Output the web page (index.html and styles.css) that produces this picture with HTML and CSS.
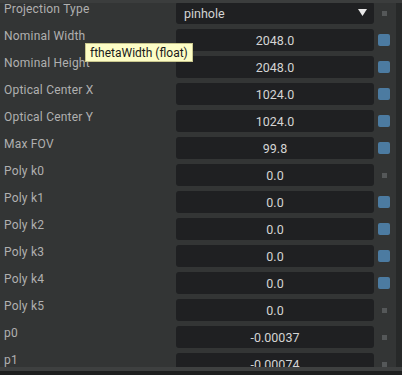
FILE: index.html
```html
<!DOCTYPE html>
<html lang="en">
<head>
    <meta charset="UTF-8">
    <title>Camera Properties</title>
    <link rel="stylesheet" href="styles.css">
</head>
<body>
    <div class="top-edge"></div>
    <div class="main">
        <div class="viewport">
            <div class="rows">
                <div class="row">
                    <div class="label">Projection Type</div>
                    <div class="field combo">
                        <span>pinhole</span>
                        <svg class="arrow" width="9" height="7" viewBox="0 0 9 7"><path d="M0 0 H9 L4.5 7 Z" fill="#e8e8e8"/></svg>
                    </div>
                    <div class="ctrl"><span class="dot"></span></div>
                </div>
                <div class="row">
                    <div class="label">Nominal Width</div>
                    <div class="field">2048.0</div>
                    <div class="ctrl"><span class="check"></span></div>
                </div>
                <div class="row">
                    <div class="label">Nominal Height</div>
                    <div class="field">2048.0</div>
                    <div class="ctrl"><span class="check"></span></div>
                </div>
                <div class="row">
                    <div class="label">Optical Center X</div>
                    <div class="field">1024.0</div>
                    <div class="ctrl"><span class="check"></span></div>
                </div>
                <div class="row">
                    <div class="label">Optical Center Y</div>
                    <div class="field">1024.0</div>
                    <div class="ctrl"><span class="check"></span></div>
                </div>
                <div class="row">
                    <div class="label">Max FOV</div>
                    <div class="field">99.8</div>
                    <div class="ctrl"><span class="check"></span></div>
                </div>
                <div class="row">
                    <div class="label">Poly k0</div>
                    <div class="field">0.0</div>
                    <div class="ctrl"><span class="dot"></span></div>
                </div>
                <div class="row">
                    <div class="label">Poly k1</div>
                    <div class="field">0.0</div>
                    <div class="ctrl"><span class="check"></span></div>
                </div>
                <div class="row">
                    <div class="label">Poly k2</div>
                    <div class="field">0.0</div>
                    <div class="ctrl"><span class="check"></span></div>
                </div>
                <div class="row">
                    <div class="label">Poly k3</div>
                    <div class="field">0.0</div>
                    <div class="ctrl"><span class="check"></span></div>
                </div>
                <div class="row">
                    <div class="label">Poly k4</div>
                    <div class="field">0.0</div>
                    <div class="ctrl"><span class="check"></span></div>
                </div>
                <div class="row">
                    <div class="label">Poly k5</div>
                    <div class="field">0.0</div>
                    <div class="ctrl"><span class="dot"></span></div>
                </div>
                <div class="row">
                    <div class="label">p0</div>
                    <div class="field">-0.00037</div>
                    <div class="ctrl"><span class="dot"></span></div>
                </div>
                <div class="row">
                    <div class="label">p1</div>
                    <div class="field">-0.00074</div>
                    <div class="ctrl"><span class="dot"></span></div>
                </div>
            </div>
            <div class="tooltip">fthetaWidth (float)</div>
        </div>
        <div class="scrollbar"></div>
    </div>
    <div class="bottom-edge"></div>
    <div class="bottom-dark"></div>
</body>
</html>
```

FILE: styles.css
```css
body {
    margin: 0;
    width: 402px;
    height: 375px;
    overflow: hidden;
    background-color: #333535;
    font-family: Roboto, "Liberation Sans", sans-serif;
    font-size: 12px;
    display: flex;
    flex-direction: column;
}
.top-edge {
    height: 3px;
    background-color: #3b3d3d;
    position: relative;
    z-index: 2;
}
.main {
    display: flex;
    height: 364px;
}
.viewport {
    position: relative;
    flex: 1;
    overflow: hidden;
}
.rows {
    display: flex;
    flex-direction: column;
    gap: 5px;
    margin-top: -1px;
}
.row {
    display: flex;
    height: 22px;
    flex-shrink: 0;
}
.label {
    width: 172px;
    padding-left: 4px;
    line-height: 14px;
    color: #b0b0b0;
    letter-spacing: 0.2px;
    white-space: nowrap;
}
.field {
    width: 198px;
    height: 22px;
    box-sizing: border-box;
    padding-top: 1px;
    line-height: 22px;
    text-align: center;
    font-size: 12.5px;
    color: #d4d4d4;
    background-color: #1f2022;
    border-radius: 3px;
}
.combo {
    display: flex;
    justify-content: space-between;
    align-items: center;
    padding: 0 7px 0 8px;
    text-align: left;
}
.combo span {
    line-height: 22px;
    padding-top: 1px;
}
.arrow {
    margin-top: -1px;
}
.ctrl {
    width: 20px;
    display: flex;
    justify-content: center;
    align-items: center;
}
.check {
    width: 12px;
    height: 12px;
    border-radius: 2px;
    background-color: #4c7ba1;
}
.dot {
    width: 5px;
    height: 5px;
    background-color: #555859;
}
.scrollbar {
    width: 6px;
    background-color: #272929;
}
.bottom-edge {
    height: 4px;
    background-color: #3e4040;
}
.bottom-dark {
    height: 4px;
    background-color: #1e1f1f;
}
.tooltip {
    position: absolute;
    left: 85px;
    top: 40px;
    height: 19px;
    padding: 0 4px;
    box-sizing: border-box;
    line-height: 18px;
    font-size: 12px;
    color: #1a1a1a;
    background-color: #fdfdc6;
    border: 1px solid #c9c78e;
    white-space: nowrap;
}
```
